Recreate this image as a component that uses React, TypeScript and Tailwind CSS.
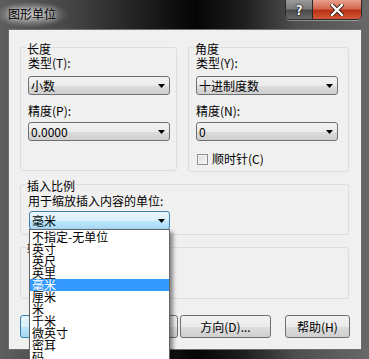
import React from "react";

const font = "font-['Noto_Sans_CJK_SC','Noto_Sans',sans-serif]";

function Arrow() {
  return (
    <svg width="7" height="4" viewBox="0 0 7 4" className="shrink-0">
      <path d="M0 0H7L3.5 4Z" fill="#000" />
    </svg>
  );
}

function Combo({ text, w, focused = false }: { text: string; w: string; focused?: boolean }) {
  return (
    <div
      className={
        "h-[19px] rounded-[3px] border flex items-center justify-between pl-[2px] pr-[4px] text-[12px] leading-[12px] text-black " +
        w +
        " " +
        (focused
          ? "border-[#3c7fb1] bg-[linear-gradient(180deg,#eaf6fd_0%,#d9f0fc_50%,#bee6fd_51%,#a7d9f5_100%)]"
          : "border-[#707070] bg-[linear-gradient(180deg,#f2f2f2_0%,#ebebeb_50%,#dddddd_51%,#cfcfcf_100%)]")
      }
    >
      <span>{text}</span>
      <Arrow />
    </div>
  );
}

function Legend({ text }: { text: string }) {
  return (
    <span className="absolute -top-[5px] left-[5px] px-[1px] bg-[#f0f0f0] text-[12px] leading-[12px] text-black">
      {text}
    </span>
  );
}

function Btn({ text, w, focused = false }: { text: string; w: string; focused?: boolean }) {
  return (
    <div
      className={
        "h-[23px] rounded-[3px] border flex items-center justify-center text-[12px] leading-[12px] text-black " +
        w +
        " " +
        (focused
          ? "border-[#3c7fb1] bg-[linear-gradient(180deg,#eaf6fd_0%,#d9f0fc_50%,#bee6fd_51%,#a7d9f5_100%)]"
          : "border-[#707070] bg-[linear-gradient(180deg,#f2f2f2_0%,#ebebeb_50%,#dddddd_51%,#cfcfcf_100%)]")
      }
    >
      {text}
    </div>
  );
}

const items = ["不指定-无单位", "英寸", "英尺", "英里", "毫米", "厘米", "米", "千米", "微英寸", "密耳", "码"];

export default function App() {
  return (
    <div
      className={
        "relative w-[369px] h-[359px] overflow-hidden flex flex-col " +
        font +
        " bg-[linear-gradient(90deg,#5e5e5e_0%,#474747_18%,#1c1c1c_40%,#050505_53%,#1e1e1e_66%,#4e4e4e_80%,#686868_100%)]"
      }
    >
      {/* title bar */}
      <div className="h-[29px] flex items-start shrink-0">
        <div className="h-[29px] w-[74px] flex items-start bg-[radial-gradient(ellipse_50%_45%_at_42%_50%,rgba(255,255,255,0.6)_0%,rgba(210,210,210,0.35)_55%,rgba(180,180,180,0)_100%)]">
          <span className="mt-[7px] ml-[8px] text-[12px] leading-[14px] text-black [text-shadow:0_0_5px_rgba(255,255,255,0.95)]">
            图形单位
          </span>
        </div>
        <div className="ml-auto mr-[7px] flex h-[20px] rounded-b-[5px] border border-t-0 border-[#2a2a2a] overflow-hidden shadow-[0_1px_0_rgba(255,255,255,0.35)]">
          <div className="w-[27px] h-full flex items-center justify-center border-r border-[#2a2a2a] bg-[linear-gradient(180deg,#9a9a9a_0%,#7a7a7a_45%,#4a4a4a_55%,#6a6a6a_100%)] text-white font-bold text-[13px] leading-[13px] [text-shadow:0_0_2px_#000,0_0_1px_#000]">
            ?
          </div>
          <div className="w-[48px] h-full flex items-center justify-center bg-[linear-gradient(180deg,#e7a08e_0%,#d46a50_45%,#b93214_55%,#d2583a_100%)]">
            <svg width="14" height="12" viewBox="0 0 14 12">
              <path d="M2 1L12 11M12 1L2 11" stroke="#3a1a10" strokeWidth="4.2" strokeLinecap="square" />
              <path d="M2 1L12 11M12 1L2 11" stroke="#ffffff" strokeWidth="2.4" strokeLinecap="square" />
            </svg>
          </div>
        </div>
      </div>

      {/* client area */}
      <div className="ml-[8px] mr-[7px] h-[321px] border border-[#6f6f6f] bg-[#f0f0f0] flex flex-col text-black">
        {/* top row */}
        <div className="mt-[17px] ml-[11px] flex items-start gap-[11px]">
          <div className="relative w-[157px] h-[124px] rounded-[3px] border border-[#d5dfe5] pl-[7px] pr-[6px] pt-[9px] flex flex-col">
            <Legend text="长度" />
            <span className="text-[12px] leading-[12px]">类型(T):</span>
            <div className="mt-[7px]">
              <Combo text="小数" w="w-[142px]" />
            </div>
            <span className="mt-[10px] text-[12px] leading-[12px]">精度(P):</span>
            <div className="mt-[5px]">
              <Combo text="0.0000" w="w-[142px]" />
            </div>
          </div>
          <div className="relative w-[161px] h-[125px] rounded-[3px] border border-[#d5dfe5] pl-[7px] pr-[10px] pt-[9px] flex flex-col">
            <Legend text="角度" />
            <span className="text-[12px] leading-[12px]">类型(Y):</span>
            <div className="mt-[7px]">
              <Combo text="十进制度数" w="w-[142px]" />
            </div>
            <span className="mt-[10px] text-[12px] leading-[12px]">精度(N):</span>
            <div className="mt-[5px]">
              <Combo text="0" w="w-[142px]" />
            </div>
            <div className="mt-[12px] flex items-center">
              <div className="ml-[1px] w-[11px] h-[11px] border border-[#8f8f8f] bg-[linear-gradient(135deg,#dcdcdc_0%,#f6f6f6_100%)] shadow-[inset_0_0_0_1px_#f4f4f4]" />
              <span className="ml-[4px] text-[12px] leading-[12px]">顺时针(C)</span>
            </div>
          </div>
        </div>

        {/* insertion scale */}
        <div className="relative mt-[12px] ml-[11px] w-[329px] h-[51px] rounded-[3px] border border-[#d5dfe5] pl-[7px] pt-[10px] flex flex-col">
          <Legend text="插入比例" />
          <span className="text-[12px] leading-[12px]">用于缩放插入内容的单位:</span>
          <div className="mt-[4px] ml-[1px]">
            <Combo text="毫米" w="w-[141px]" focused />
          </div>
        </div>

        {/* sample output */}
        <div className="relative mt-[12px] ml-[11px] w-[329px] h-[52px] rounded-[3px] border border-[#d5dfe5] pl-[10px] pt-[12px] flex flex-col text-[12px] leading-[14px]">
          <Legend text="输出样例" />
          <span>1.5000,2.0039,0.0000</span>
          <span>3&lt;45,0</span>
        </div>

        {/* buttons */}
        <div className="mt-[16px] ml-[11px] flex items-center">
          <Btn text="确定" w="w-[75px]" focused />
          <Btn text="取消" w="w-[75px] ml-[8px]" />
          <Btn text="方向(D)..." w="w-[91px] ml-[2px]" />
          <Btn text="帮助(H)" w="w-[65px] ml-[14px]" />
        </div>
      </div>

      {/* dropdown list overlay */}
      <div className="absolute left-[29px] top-[229px] w-[141px] h-[140px] border border-[#646464] bg-white pt-[1px] shadow-[3px_3px_4px_rgba(0,0,0,0.45)] flex flex-col">
        {items.map((it) => (
          <div
            key={it}
            className={
              "h-[12px] pl-[2px] text-[12px] leading-[12px] whitespace-nowrap " +
              (it === "毫米" ? "bg-[#3399ff] text-white" : "text-black")
            }
          >
            {it}
          </div>
        ))}
      </div>
    </div>
  );
}
